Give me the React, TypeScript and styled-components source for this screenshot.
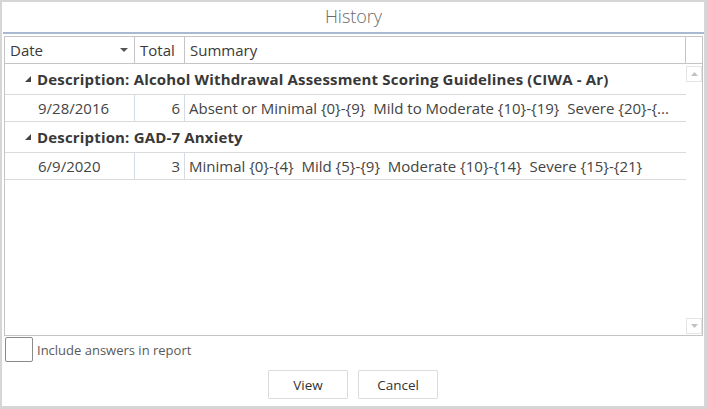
import React from "react";
import styled, { createGlobalStyle } from "styled-components";

const Global = createGlobalStyle`
  html, body { margin: 0; padding: 0; background: #ffffff; }
  * { box-sizing: border-box; }
  body { font-family: "Open Sans", "Noto Sans", sans-serif; }
`;

const Window = styled.div`
  width: 707px;
  height: 409px;
  background: #ffffff;
  border-style: solid;
  border-color: #d6d6d6;
  border-width: 2px 3px 3px 2px;
  display: flex;
  flex-direction: column;
`;

const TitleBar = styled.div`
  height: 32px;
  margin-left: 1px;
  border-bottom: 2px solid #a9bad0;
  display: flex;
  align-items: center;
  justify-content: center;
  font-family: "Open Sans", sans-serif;
  font-weight: 300;
  font-size: 18px;
  color: #6a6a6a;
  padding-bottom: 2px;
`;

const Grid = styled.div`
  margin: 2px 1px 0 2px;
  height: 300px;
  border: 1px solid #c4c4c4;
  display: flex;
  flex-direction: column;
  font-family: "Open Sans", sans-serif;
  font-size: 15px;
  color: #3c3c3c;
`;

const HeaderRow = styled.div`
  display: flex;
  height: 27px;
  border-bottom: 1px solid #c4c4c4;
  flex-shrink: 0;
`;

const HeaderCell = styled.div<{ $w?: number; $grow?: boolean; $last?: boolean }>`
  width: ${(p) => (p.$w ? `${p.$w}px` : "auto")};
  flex: ${(p) => (p.$grow ? "1 1 auto" : "0 0 auto")};
  border-right: ${(p) => (p.$last ? "none" : "1px solid #c4c4c4")};
  display: flex;
  align-items: center;
  padding-left: 5px;
  position: relative;
  color: #3a3a3a;
`;

const SortArrow = styled.svg`
  position: absolute;
  right: 6px;
  top: 11px;
`;

const Body = styled.div`
  flex: 1;
  display: flex;
  min-height: 0;
`;

const Rows = styled.div`
  flex: 1;
  min-width: 0;
  display: flex;
  flex-direction: column;
`;

const GroupRow = styled.div`
  height: 31px;
  border-bottom: 1px solid #dadada;
  display: flex;
  align-items: center;
  padding-left: 20px;
  gap: 6px;
  font-weight: 700;
  letter-spacing: 0.17px;
  color: #383838;
  white-space: nowrap;
`;

const DataRow = styled.div`
  height: 27px;
  border-bottom: 1px solid #dadada;
  display: flex;
`;

const Cell = styled.div<{ $w?: number; $align?: string; $pl?: number; $pr?: number; $grow?: boolean; $noBorder?: boolean }>`
  width: ${(p) => (p.$w ? `${p.$w}px` : "auto")};
  flex: ${(p) => (p.$grow ? "1 1 0" : "0 0 auto")};
  min-width: 0;
  border-right: ${(p) => (p.$noBorder ? "none" : "1px solid #d4dbe3")};
  display: flex;
  align-items: center;
  justify-content: ${(p) => p.$align || "flex-start"};
  padding-left: ${(p) => p.$pl ?? 0}px;
  padding-right: ${(p) => p.$pr ?? 0}px;
  color: #444444;
  white-space: pre;
`;

const ScrollCol = styled.div`
  width: 16px;
  display: flex;
  flex-direction: column;
  justify-content: space-between;
  align-items: center;
  padding: 2px 0 1px;
`;

const ScrollBtn = styled.div`
  width: 16px;
  height: 16px;
  border: 1px solid #e4e4e4;
  display: flex;
  align-items: center;
  justify-content: center;
`;

const OptionRow = styled.div`
  display: flex;
  align-items: center;
  gap: 4px;
  margin: 1px 0 0 3px;
  height: 25px;
`;

const CheckBox = styled.div`
  width: 28px;
  height: 25px;
  border: 1px solid #8a8a8a;
  border-radius: 2px;
  background: #fff;
`;

const Label = styled.span`
  font-family: "Open Sans", sans-serif;
  font-size: 13px;
  color: #5a5a5a;
`;

const Buttons = styled.div`
  display: flex;
  justify-content: center;
  gap: 10px;
  margin-top: 8px;
`;

const Button = styled.button`
  width: 80px;
  height: 29px;
  background: #ffffff;
  border: 1px solid #dcdcdc;
  border-radius: 1px;
  font-family: "Open Sans", sans-serif;
  font-size: 13.5px;
  color: #333333;
  padding: 0;
`;

const Expander = () => (
  <svg width="6" height="6" viewBox="0 0 6 6">
    <polygon points="6,0 6,6 0,6" fill="#444" />
  </svg>
);

export default function App() {
  return (
    <>
      <Global />
      <Window>
        <TitleBar>History</TitleBar>
        <Grid>
          <HeaderRow>
            <HeaderCell $w={130}>
              Date
              <SortArrow width="8" height="4" viewBox="0 0 8 4">
                <polygon points="0,0 8,0 4,4" fill="#555" />
              </SortArrow>
            </HeaderCell>
            <HeaderCell $w={50}>Total</HeaderCell>
            <HeaderCell $grow>Summary</HeaderCell>
            <HeaderCell $w={16} $last />
          </HeaderRow>
          <Body>
            <Rows>
              <GroupRow>
                <Expander />
                Description: Alcohol Withdrawal Assessment Scoring Guidelines (CIWA - Ar)
              </GroupRow>
              <DataRow>
                <Cell $w={130} $pl={33}>9/28/2016</Cell>
                <Cell $w={50} $align="flex-end" $pr={4}>6</Cell>
                <Cell $grow $pl={4} $noBorder>
                  {"Absent or Minimal {0}-{9}  Mild to Moderate {10}-{19}  Severe {20}-{..."}
                </Cell>
              </DataRow>
              <GroupRow>
                <Expander />
                Description: GAD-7 Anxiety
              </GroupRow>
              <DataRow>
                <Cell $w={130} $pl={33}>6/9/2020</Cell>
                <Cell $w={50} $align="flex-end" $pr={4}>3</Cell>
                <Cell $grow $pl={4} $noBorder>
                  {"Minimal {0}-{4}  Mild {5}-{9}  Moderate {10}-{14}  Severe {15}-{21}"}
                </Cell>
              </DataRow>
            </Rows>
            <ScrollCol>
              <ScrollBtn>
                <svg width="7" height="4" viewBox="0 0 7 4"><polygon points="0,4 7,4 3.5,0" fill="#c2c2c2" /></svg>
              </ScrollBtn>
              <ScrollBtn>
                <svg width="7" height="4" viewBox="0 0 7 4"><polygon points="0,0 7,0 3.5,4" fill="#c2c2c2" /></svg>
              </ScrollBtn>
            </ScrollCol>
          </Body>
        </Grid>
        <OptionRow>
          <CheckBox />
          <Label>Include answers in report</Label>
        </OptionRow>
        <Buttons>
          <Button>View</Button>
          <Button>Cancel</Button>
        </Buttons>
      </Window>
    </>
  );
}
